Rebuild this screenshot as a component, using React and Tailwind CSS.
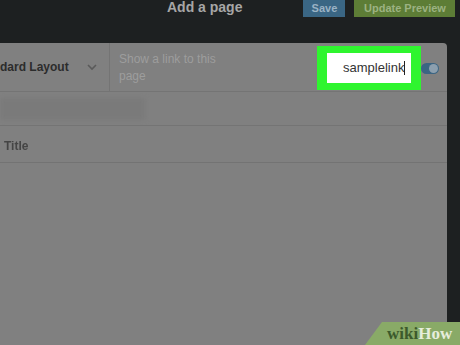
export default function App() {
    return (
        <div className="relative w-[460px] h-[345px] overflow-hidden bg-[#1d2021] font-['Liberation_Sans',sans-serif] flex flex-col">
            {/* header bar */}
            <div className="h-[43px] shrink-0 flex items-start">
                <div className="ml-[167px] mt-[-1px] text-[14px] leading-[16px] font-bold text-[#a6a6a6]">
                    Add a page
                </div>
                <div className="ml-[61px] w-[42px] h-[17px] bg-[#3a6684] text-[#9ab2c4] text-[11px] font-bold flex items-center justify-center">
                    Save
                </div>
                <div className="ml-[9px] w-[101px] h-[17px] bg-[#5d7d36] text-[#9cb282] text-[11px] font-bold flex items-center justify-center">
                    Update Preview
                </div>
            </div>

            {/* panel */}
            <div className="w-[447px] flex-1 bg-[#808080] rounded-tr-[4px] flex flex-col">
                <div className="h-[49px] shrink-0 flex items-stretch border-b border-[#747474]">
                    <div className="w-[110px] shrink-0 flex items-center justify-between pr-[11px] border-r border-[#747474]">
                        <span className="text-[12px] font-bold text-[#2c2c2c] whitespace-nowrap">
                            dard Layout
                        </span>
                        <svg className="shrink-0" width="12" height="8" viewBox="0 0 12 8">
                            <path d="M2 2l4 4 4-4" fill="none" stroke="#5a5a5a" strokeWidth="1.6" />
                        </svg>
                    </div>
                    <div className="ml-[9px] w-[110px] pt-[8px] text-[12px] leading-[17px] text-[#9d9d9d]">
                        Show a link to this page
                    </div>
                    <div className="ml-[88px] mt-[3px] w-[104px] h-[44px] bg-[#2ff52f] flex items-center justify-center">
                        <div className="w-[84px] h-[30px] bg-white flex items-center pl-[16px] text-[13px] text-[#333]">
                            samplelink<span className="w-[1px] h-[14px] bg-[#222]"></span>
                        </div>
                    </div>
                    <div className="mt-[20px] w-[18px] h-[11px] rounded-full bg-[#3b6583] flex items-center justify-end pr-[1px]">
                        <div className="w-[9px] h-[9px] rounded-full bg-[#8c9fae]"></div>
                    </div>
                </div>

                <div className="h-[34px] shrink-0 flex items-center border-b border-[#747474]">
                    <div className="w-[145px] h-[22px] bg-[#7a7a7a] blur-[2px]"></div>
                </div>

                <div className="h-[37px] shrink-0 flex items-center pt-[3px] border-b border-[#737373]">
                    <span className="ml-[4px] text-[12px] font-bold text-[#454545] blur-[0.4px]">Title</span>
                </div>
            </div>

            {/* wikiHow badge */}
            <div className="absolute left-[365px] bottom-0 w-[95px] h-[23px] bg-[#89aa67] [clip-path:polygon(17px_0,100%_0,100%_100%,0_100%)] flex items-center pl-[22px]">
                <span className="font-['Liberation_Serif',serif] font-bold text-[17px] leading-[17px] text-[#3c5a2c]">wiki</span>
                <span className="font-['Liberation_Serif',serif] font-bold text-[17px] leading-[17px] text-[#e6eddc]">How</span>
            </div>
        </div>
    )
}
